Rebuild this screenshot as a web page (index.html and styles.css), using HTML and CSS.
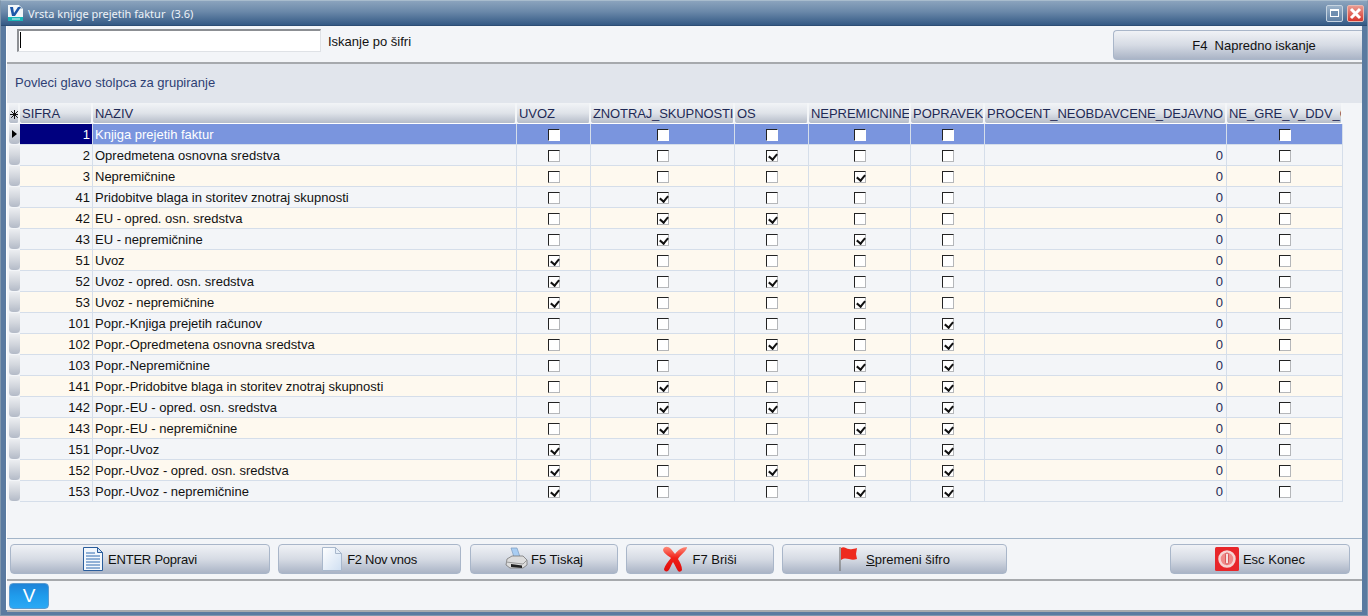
FILE: index.html
```html
<!DOCTYPE html>
<html lang="sl">
<head>
    <meta charset="UTF-8">
    <title>Vrsta knjige prejetih faktur</title>
    <link rel="stylesheet" href="styles.css">
</head>
<body>
<div class="window">
    <div class="titlebar">
        <svg class="app-icon" width="17" height="18" viewBox="0 0 17 18">
            <path d="M1 1h11l4 4v12H1z" fill="#f2f6f9"/>
            <path d="M12 1v4h4z" fill="#b9c9d6"/>
            <path d="M3 3h3l1 6 4-6h3l-6 9H5z" fill="#1c56a8"/>
            <rect x="1" y="13" width="15" height="4" fill="#18b6b8"/>
            <path d="M5 15h8" stroke="#d8f4f2"/>
        </svg>
        <span class="title-text">Vrsta knjige prejetih faktur&nbsp; (3.6)</span>
        <span class="win-btn win-max"><span class="max-glyph"></span></span>
        <span class="win-btn win-close">
            <svg width="13" height="13" viewBox="0 0 13 13"><path d="M2 2l9 9M11 2l-9 9" stroke="#fff" stroke-width="3"/></svg>
        </span>
    </div>

    <div class="client">
        <div class="search-panel">
            <div class="search-box"><span class="caret"></span></div>
            <span class="search-label">Iskanje po šifri</span>
            <button class="btn btn-search">F4&nbsp; Napredno iskanje</button>
        </div>

        <div class="group-panel">Povleci glavo stolpca za grupiranje</div>

        <div class="grid-area">
            <table class="grid">
                <colgroup>
                    <col class="c-ind"><col class="c-sifra"><col class="c-naziv"><col class="c-uvoz"><col class="c-zn"><col class="c-os"><col class="c-nep"><col class="c-pop"><col class="c-pro"><col class="c-ne">
                </colgroup>
                <thead>
                    <tr>
                        <th class="ind-head"><svg width="9" height="9" viewBox="0 0 9 9"><path d="M4.500 0v9M0 4.500h9M1.200 1.200l6.600 6.600M7.800 1.200L1.200 7.800" stroke="#111"/></svg></th>
                        <th>SIFRA</th><th>NAZIV</th><th>UVOZ</th><th class="th-tight">ZNOTRAJ_SKUPNOSTI</th><th>OS</th><th>NEPREMICNINE</th><th>POPRAVEK</th><th>PROCENT_NEOBDAVCENE_DEJAVNO</th><th>NE_GRE_V_DDV_OSNOVO</th>
                    </tr>
                </thead>
                <tbody>
                    <tr class="current"><td class="ind"></td><td class="num">1</td><td>Knjiga prejetih faktur</td><td class="chk"><i class="cb"></i></td><td class="chk"><i class="cb"></i></td><td class="chk"><i class="cb"></i></td><td class="chk"><i class="cb"></i></td><td class="chk"><i class="cb"></i></td><td class="pct"></td><td class="chk"><i class="cb"></i></td></tr>
                    <tr><td class="ind"></td><td class="num">2</td><td>Opredmetena osnovna sredstva</td><td class="chk"><i class="cb"></i></td><td class="chk"><i class="cb"></i></td><td class="chk"><i class="cb on"></i></td><td class="chk"><i class="cb"></i></td><td class="chk"><i class="cb"></i></td><td class="pct">0</td><td class="chk"><i class="cb"></i></td></tr>
                    <tr><td class="ind"></td><td class="num">3</td><td>Nepremičnine</td><td class="chk"><i class="cb"></i></td><td class="chk"><i class="cb"></i></td><td class="chk"><i class="cb"></i></td><td class="chk"><i class="cb on"></i></td><td class="chk"><i class="cb"></i></td><td class="pct">0</td><td class="chk"><i class="cb"></i></td></tr>
                    <tr><td class="ind"></td><td class="num">41</td><td>Pridobitve blaga in storitev znotraj skupnosti</td><td class="chk"><i class="cb"></i></td><td class="chk"><i class="cb on"></i></td><td class="chk"><i class="cb"></i></td><td class="chk"><i class="cb"></i></td><td class="chk"><i class="cb"></i></td><td class="pct">0</td><td class="chk"><i class="cb"></i></td></tr>
                    <tr><td class="ind"></td><td class="num">42</td><td>EU - opred. osn. sredstva</td><td class="chk"><i class="cb"></i></td><td class="chk"><i class="cb on"></i></td><td class="chk"><i class="cb on"></i></td><td class="chk"><i class="cb"></i></td><td class="chk"><i class="cb"></i></td><td class="pct">0</td><td class="chk"><i class="cb"></i></td></tr>
                    <tr><td class="ind"></td><td class="num">43</td><td>EU - nepremičnine</td><td class="chk"><i class="cb"></i></td><td class="chk"><i class="cb on"></i></td><td class="chk"><i class="cb"></i></td><td class="chk"><i class="cb on"></i></td><td class="chk"><i class="cb"></i></td><td class="pct">0</td><td class="chk"><i class="cb"></i></td></tr>
                    <tr><td class="ind"></td><td class="num">51</td><td>Uvoz</td><td class="chk"><i class="cb on"></i></td><td class="chk"><i class="cb"></i></td><td class="chk"><i class="cb"></i></td><td class="chk"><i class="cb"></i></td><td class="chk"><i class="cb"></i></td><td class="pct">0</td><td class="chk"><i class="cb"></i></td></tr>
                    <tr><td class="ind"></td><td class="num">52</td><td>Uvoz - opred. osn. sredstva</td><td class="chk"><i class="cb on"></i></td><td class="chk"><i class="cb"></i></td><td class="chk"><i class="cb on"></i></td><td class="chk"><i class="cb"></i></td><td class="chk"><i class="cb"></i></td><td class="pct">0</td><td class="chk"><i class="cb"></i></td></tr>
                    <tr><td class="ind"></td><td class="num">53</td><td>Uvoz - nepremičnine</td><td class="chk"><i class="cb on"></i></td><td class="chk"><i class="cb"></i></td><td class="chk"><i class="cb"></i></td><td class="chk"><i class="cb on"></i></td><td class="chk"><i class="cb"></i></td><td class="pct">0</td><td class="chk"><i class="cb"></i></td></tr>
                    <tr><td class="ind"></td><td class="num">101</td><td>Popr.-Knjiga prejetih računov</td><td class="chk"><i class="cb"></i></td><td class="chk"><i class="cb"></i></td><td class="chk"><i class="cb"></i></td><td class="chk"><i class="cb"></i></td><td class="chk"><i class="cb on"></i></td><td class="pct">0</td><td class="chk"><i class="cb"></i></td></tr>
                    <tr><td class="ind"></td><td class="num">102</td><td>Popr.-Opredmetena osnovna sredstva</td><td class="chk"><i class="cb"></i></td><td class="chk"><i class="cb"></i></td><td class="chk"><i class="cb on"></i></td><td class="chk"><i class="cb"></i></td><td class="chk"><i class="cb on"></i></td><td class="pct">0</td><td class="chk"><i class="cb"></i></td></tr>
                    <tr><td class="ind"></td><td class="num">103</td><td>Popr.-Nepremičnine</td><td class="chk"><i class="cb"></i></td><td class="chk"><i class="cb"></i></td><td class="chk"><i class="cb"></i></td><td class="chk"><i class="cb on"></i></td><td class="chk"><i class="cb on"></i></td><td class="pct">0</td><td class="chk"><i class="cb"></i></td></tr>
                    <tr><td class="ind"></td><td class="num">141</td><td>Popr.-Pridobitve blaga in storitev znotraj skupnosti</td><td class="chk"><i class="cb"></i></td><td class="chk"><i class="cb on"></i></td><td class="chk"><i class="cb"></i></td><td class="chk"><i class="cb"></i></td><td class="chk"><i class="cb on"></i></td><td class="pct">0</td><td class="chk"><i class="cb"></i></td></tr>
                    <tr><td class="ind"></td><td class="num">142</td><td>Popr.-EU - opred. osn. sredstva</td><td class="chk"><i class="cb"></i></td><td class="chk"><i class="cb on"></i></td><td class="chk"><i class="cb on"></i></td><td class="chk"><i class="cb"></i></td><td class="chk"><i class="cb on"></i></td><td class="pct">0</td><td class="chk"><i class="cb"></i></td></tr>
                    <tr><td class="ind"></td><td class="num">143</td><td>Popr.-EU - nepremičnine</td><td class="chk"><i class="cb"></i></td><td class="chk"><i class="cb on"></i></td><td class="chk"><i class="cb"></i></td><td class="chk"><i class="cb on"></i></td><td class="chk"><i class="cb on"></i></td><td class="pct">0</td><td class="chk"><i class="cb"></i></td></tr>
                    <tr><td class="ind"></td><td class="num">151</td><td>Popr.-Uvoz</td><td class="chk"><i class="cb on"></i></td><td class="chk"><i class="cb"></i></td><td class="chk"><i class="cb"></i></td><td class="chk"><i class="cb"></i></td><td class="chk"><i class="cb on"></i></td><td class="pct">0</td><td class="chk"><i class="cb"></i></td></tr>
                    <tr><td class="ind"></td><td class="num">152</td><td>Popr.-Uvoz - opred. osn. sredstva</td><td class="chk"><i class="cb on"></i></td><td class="chk"><i class="cb"></i></td><td class="chk"><i class="cb on"></i></td><td class="chk"><i class="cb"></i></td><td class="chk"><i class="cb on"></i></td><td class="pct">0</td><td class="chk"><i class="cb"></i></td></tr>
                    <tr><td class="ind"></td><td class="num">153</td><td>Popr.-Uvoz - nepremičnine</td><td class="chk"><i class="cb on"></i></td><td class="chk"><i class="cb"></i></td><td class="chk"><i class="cb"></i></td><td class="chk"><i class="cb on"></i></td><td class="chk"><i class="cb on"></i></td><td class="pct">0</td><td class="chk"><i class="cb"></i></td></tr>
                </tbody>
            </table>
        </div>

        <div class="button-bar">
            <button class="btn btn-popravi">
                <svg width="20" height="24" viewBox="0 0 20 24"><path d="M.5.5h14l5 5v18H.5z" fill="#f2f7fd" stroke="#2a5d9c"/><path d="M14.500.5v5h5z" fill="#cfe0f2" stroke="#2a5d9c"/><path d="M3 6h9M3 9h14M3 12h14M3 15h14M3 18h14M3 21h14" stroke="#2f6bb0"/></svg>
                ENTER Popravi
            </button>
            <button class="btn btn-nov">
                <svg width="20" height="24" viewBox="0 0 20 24"><defs><linearGradient id="pg" x1="0" y1="0" x2="1" y2="1"><stop offset="0" stop-color="#fff"/><stop offset="1" stop-color="#cfdff2"/></linearGradient></defs><path d="M.5.5h13l6 6v17H.5z" fill="url(#pg)" stroke="#a9b8cc"/><path d="M13.500.5v6h6z" fill="#e4edf7" stroke="#a9b8cc"/></svg>
                F2 Nov vnos
            </button>
            <button class="btn btn-tiskaj">
                <svg width="24" height="24" viewBox="0 0 24 24"><path d="M6 1h6l3 9H9z" fill="#a9cdf2" stroke="#7b9cc0" stroke-width=".7"/><path d="M2 12l5-3h11l4 4v5l-4 3H5l-4-3z" fill="#dcdcdc" stroke="#777" stroke-width=".8"/><path d="M1 15l17 2 4-4" fill="none" stroke="#999"/><path d="M6 17l11 1.500v2.500L6 20z" fill="#222"/></svg>
                F5 Tiskaj
            </button>
            <button class="btn btn-brisi">
                <svg width="24" height="26" viewBox="0 0 24 26"><defs><linearGradient id="xg" x1="0" y1="0" x2="0" y2="1"><stop offset="0" stop-color="#ff8a78"/><stop offset=".45" stop-color="#f02018"/><stop offset="1" stop-color="#e00c0c"/></linearGradient></defs><path d="M0 4c1-4 5-4 8-1l4 5c3-4 7-7 12-7 0 4-7 8-9 12 2 3 4 7 4 11-1 2-3 2-4 1-2-3-3-6-5-9-2 3-3 7-5 9-2 1-4 0-4-2 1-4 4-7 7-11C6 10 1 8 0 4z" fill="url(#xg)"/></svg>
                F7 Briši
            </button>
            <button class="btn btn-sifra">
                <svg width="20" height="26" viewBox="0 0 20 26"><path d="M1 1v24" stroke="#777" stroke-width="1.200"/><path d="M2 2c3-2 5 1 8 1 3 .5 5 0 8-1l-1 6 1 5c-3 1-5 1-8 0-3-.500-5-1-8 1z" fill="#ee2a1e"/></svg>
                <span><u>S</u>premeni šifro</span>
            </button>
            <button class="btn btn-konec">
                <svg width="24" height="24" viewBox="0 0 24 24"><rect width="24" height="24" rx="1.500" fill="#e8262a"/><circle cx="12" cy="12" r="7.500" fill="#f08a88" stroke="#f6d4d2" stroke-width="2.500"/><rect x="10.500" y="6" width="3" height="11" rx="1.500" fill="#f6e4e2" stroke="#c8191c" stroke-width=".6"/></svg>
                Esc Konec
            </button>
        </div>

        <div class="status-panel">
            <span class="v-btn">V</span>
        </div>
    </div>
</div>
</body>
</html>
```

FILE: styles.css
```css
* {
    box-sizing: border-box;
}

html, body {
    margin: 0;
    padding: 0;
    height: 100%;
    overflow: hidden;
}

body {
    font-family: "Liberation Sans", Arial, sans-serif;
    font-size: 13px;
    color: #111;
}

.window {
    height: 616px;
    display: flex;
    flex-direction: column;
    background: #5a7aa0;
    border: 1px solid #7f96ad;
    border-top-color: #a8bccd;
    padding: 0 5px 5px;
}

.titlebar {
    height: 25px;
    margin: 0 -5px;
    padding: 0 3px 0 6px;
    flex: none;
    display: flex;
    align-items: center;
    background: linear-gradient(#8ba3bd, #6a88a9 45%, #345a85);
    border-bottom: 1px solid #2c4d74;
}

.app-icon {
    margin-right: 4px;
}

.title-text {
    flex: 1;
    color: #eef3f8;
    font-family: "Noto Sans", sans-serif;
    font-size: 11px;
}

.win-btn {
    width: 17px;
    height: 17px;
    margin-left: 4px;
    display: flex;
    align-items: center;
    justify-content: center;
    border: 1px solid #c5d3e0;
    border-radius: 2px;
}

.win-max {
    background: linear-gradient(#9bb2c9, #5f80a4);
}

.max-glyph {
    width: 9px;
    height: 8px;
    background: #6f8eb0;
    border: 1px solid #fff;
    border-top-width: 2px;
}

.win-close {
    background: linear-gradient(#e99a90, #d8362c);
    border-color: #e8b8b0;
}

.client {
    flex: 1;
    display: flex;
    flex-direction: column;
    background: #f3f5f8;
    border-left: 1px solid #fff;
    min-height: 0;
}

.search-panel {
    height: 38px;
    flex: none;
    display: flex;
    align-items: flex-start;
    padding: 4px 0 0 10px;
    border-bottom: 2px solid #a6a9ad;
}

.search-box {
    width: 304px;
    height: 23px;
    margin-top: -1px;
    background: #fff;
    border: 1px solid #dfe2e6;
    border-top: 2px solid #8c8f93;
    border-left: 2px solid #8c8f93;
    padding: 1px 0 0 1px;
}

.caret {
    display: block;
    width: 1px;
    height: 16px;
    background: #000;
}

.search-label {
    flex: 1;
    padding: 4px 0 0 7px;
}

.btn {
    height: 30px;
    padding: 0;
    display: flex;
    align-items: center;
    justify-content: center;
    gap: 5px;
    font-family: "Liberation Sans", Arial, sans-serif;
    font-size: 13px;
    color: #111;
    background: linear-gradient(#f0f2f6, #d6dbe4 50%, #aab4c6);
    border: 1px solid #a9b6c9;
    border-radius: 4px;
}

.btn-search {
    width: 249px;
    padding-left: 32px;
    border-right: none;
    border-radius: 4px 0 0 4px;
}

.group-panel {
    height: 39px;
    flex: none;
    padding: 11px 0 0 8px;
    color: #2e3f74;
    background: #e1e5ec;
}

.grid-area {
    height: 436px;
    flex: none;
    padding-left: 2px;
    border-bottom: 1px solid #a3b5c9;
}

.grid {
    width: 1334px;
    table-layout: fixed;
    border-collapse: separate;
    border-spacing: 0;
}

.c-ind { width: 11px; }
.c-sifra { width: 73px; }
.c-naziv { width: 424px; }
.c-uvoz { width: 74px; }
.c-zn { width: 144px; }
.c-os { width: 74px; }
.c-nep { width: 102px; }
.c-pop { width: 74px; }
.c-pro { width: 242px; }
.c-ne { width: 116px; }

.grid th {
    height: 21px;
    padding: 0 0 0 2px;
    overflow: hidden;
    white-space: nowrap;
    text-align: left;
    font-size: 13px;
    font-weight: normal;
    letter-spacing: -0.04px;
    color: #1f2a55;
    background: linear-gradient(#f2f4f7, #dfe3e9 50%, #b5bcc9);
    border-right: 2px solid #f4f6f8;
    border-bottom: 1px solid #fff;
    border-radius: 0 0 3px 3px;
}

.grid .th-tight {
    letter-spacing: -0.12px;
}

.grid .ind-head {
    padding: 3px 0 0 1px;
    line-height: 0;
    text-align: left;
}

.grid td {
    height: 21px;
    padding: 0 3px 0 2px;
    overflow: hidden;
    white-space: nowrap;
    border-right: 1px solid #d5deea;
    border-bottom: 1px solid #d5deea;
}

.grid tbody tr:nth-child(even) td {
    background: #f3f5f8;
}

.grid tbody tr:nth-child(odd) td {
    background: #fef9ef;
}

.grid tbody tr.current td {
    background: #7a95de;
    color: #fff;
}

.grid tbody tr td.ind {
    padding: 0;
    background: linear-gradient(#eceef1, #d2d6dd 50%, #b3bac7);
    border-radius: 0 0 4px 4px;
    border-right: none;
    border-bottom: 1px solid #f3f5f8;
    position: relative;
}

.current .ind::after {
    content: "";
    position: absolute;
    left: 3px;
    top: 6px;
    border-left: 5px solid #000;
    border-top: 4px solid transparent;
    border-bottom: 4px solid transparent;
}

.grid tbody tr.current td.num {
    background: #00007f;
}

.num, .pct {
    text-align: right;
}

.grid td.num {
    padding-right: 2px;
}

.pct {
    color: #1f2a55;
}

.grid td.chk {
    text-align: center;
    padding: 0;
}

.cb {
    display: inline-block;
    position: relative;
    vertical-align: middle;
    width: 12px;
    height: 12px;
    background: #fff;
    border: 1px solid #b5b7ba;
    border-top-color: #222;
    border-left-color: #222;
}

.current .cb {
    border-right-color: #fff;
    border-bottom-color: #fff;
}

.cb.on::after {
    content: "";
    position: absolute;
    left: 3px;
    top: 1px;
    width: 4px;
    height: 6px;
    border-right: 2px solid #111;
    border-bottom: 2px solid #111;
    transform: rotate(40deg);
}

.button-bar {
    height: 42px;
    flex: none;
    display: flex;
    padding: 5px 0 0 3px;
    gap: 8px;
    border-bottom: 2px solid #a6a9ad;
}

.btn-popravi { width: 260px; letter-spacing: -0.22px; }
.btn-nov { width: 183px; margin-right: 1px; letter-spacing: -0.3px; }
.btn-tiskaj { width: 148px; gap: 2px; }
.btn-brisi { width: 148px; }
.btn-sifra { width: 225px; gap: 7px; }
.btn-konec { width: 180px; margin-left: 155px; gap: 4px; }

.status-panel {
    flex: none;
    height: 31px;
    padding: 2px 0 0 2px;
    border-bottom: 2px solid #a6a9ad;
}

.v-btn {
    display: flex;
    align-items: center;
    justify-content: center;
    width: 40px;
    height: 26px;
    color: #fff;
    font-size: 19px;
    background: linear-gradient(#1f84d8, #1f9cec 50%, #2aa9f5);
    border: 1px solid #5a9bd0;
    border-radius: 4px;
}
```
